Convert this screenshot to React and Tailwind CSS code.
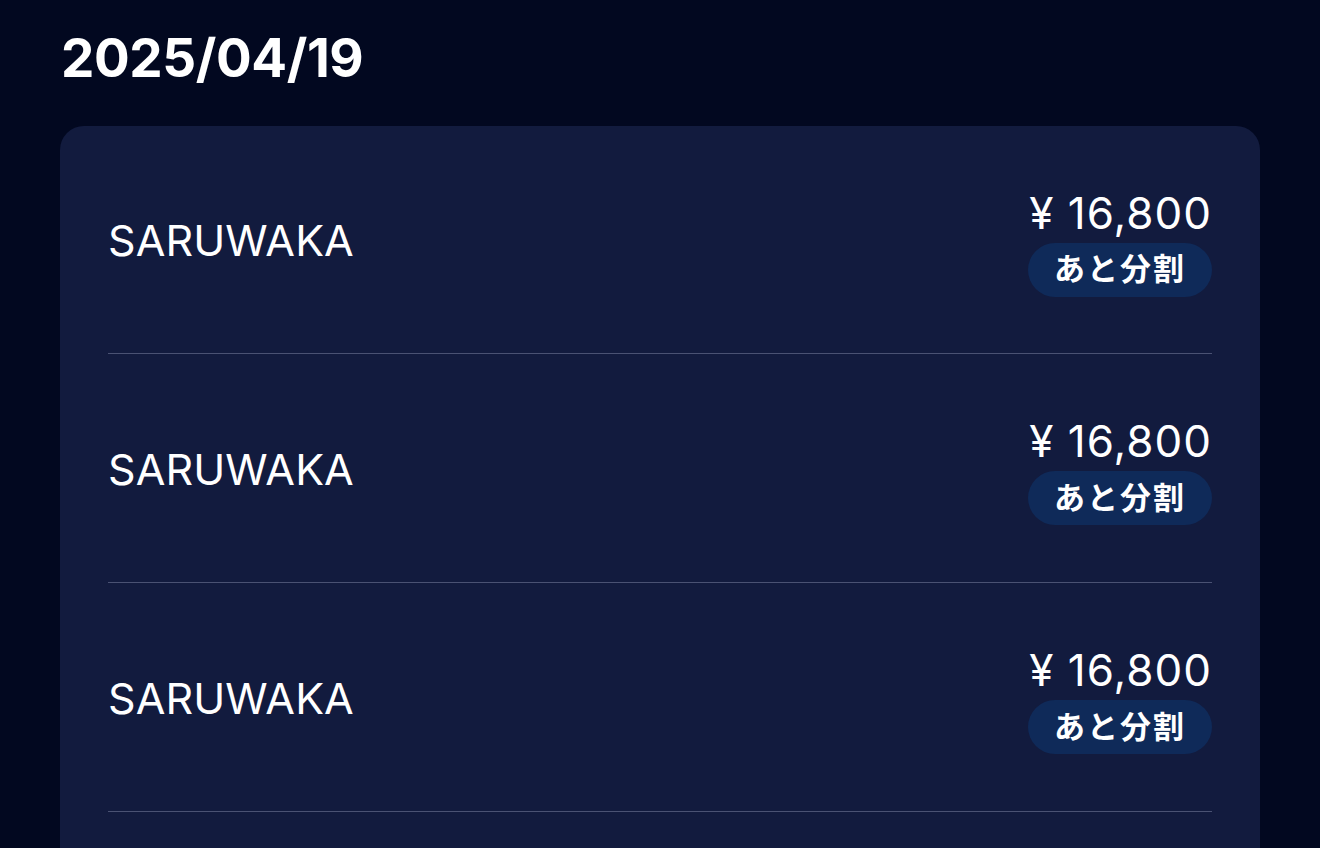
import React from "react";

const rows = [1, 2, 3];

export default function App() {
  return (
    <div
      className="h-[848px] overflow-hidden bg-[#020820] px-[60px] pt-[24px] text-white"
      style={{ fontFamily: "Inter, 'Noto Sans CJK JP', sans-serif" }}
    >
      <h1 className="ml-[1px] text-[53px] font-bold leading-[68px] tracking-[-0.4px]">2025/04/19</h1>
      <div className="mt-[34px] rounded-[24px] bg-[#121b3e] px-[48px]">
        {rows.map((r, i) => (
          <div
            key={r}
            className={`flex items-center justify-between border-b border-[#4a5273] ${i === 0 ? "h-[228px]" : "h-[229px]"}`}
          >
            <div className="pt-[2px] text-[43px] font-normal leading-none tracking-[0.1px]">SARUWAKA</div>
            <div className="flex flex-col items-end pt-[4px]">
              <div className="text-[44px] font-normal leading-[52px] tracking-[1px]">¥ 16,800</div>
              <div className="mt-[4px] flex h-[54px] items-center rounded-full bg-[#0f2a59] px-[26px] text-[31px] font-bold tracking-[2px]">
                あと分割
              </div>
            </div>
          </div>
        ))}
        <div className="h-[200px]"></div>
      </div>
    </div>
  );
}
